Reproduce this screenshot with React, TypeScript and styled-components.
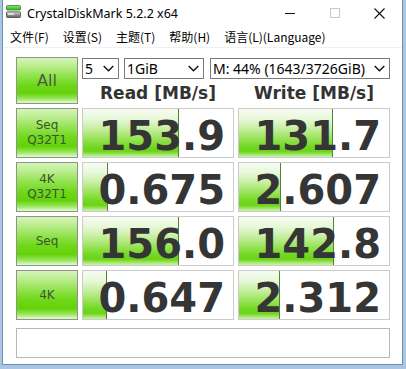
import React from 'react';
import styled, { createGlobalStyle } from 'styled-components';

const Global = createGlobalStyle`
  html, body { margin: 0; padding: 0; }
  body {
    background: #a9c6e2;
    width: 406px;
    height: 369px;
    overflow: hidden;
  }
  #root { width: 406px; height: 369px; }
`;

const Window = styled.div`
  box-sizing: border-box;
  margin-left: 2px;
  width: 401px;
  height: 365px;
  border: 1px solid #6f90b3;
  border-top: none;
  background: #ffffff;
  display: flex;
  flex-direction: column;
`;

const TitleBar = styled.div`
  height: 26px;
  display: flex;
  align-items: center;
  flex-shrink: 0;
`;

const AppIcon = styled.svg`
  margin-left: 3px;
  margin-bottom: 4px;
  flex-shrink: 0;
`;

const Title = styled.div`
  margin-left: 6px;
  font-family: "Noto Sans", "Noto Sans CJK SC", sans-serif;
  font-size: 12.5px;
  color: #000;
  white-space: nowrap;
`;

const Caption = styled.div`
  margin-left: auto;
  display: flex;
  height: 100%;
`;

const CaptionButton = styled.div`
  width: 45px;
  height: 100%;
  display: flex;
  align-items: center;
  justify-content: center;
`;

const MenuBar = styled.div`
  height: 21px;
  display: flex;
  align-items: center;
  flex-shrink: 0;
  border-bottom: 1px solid #f0f0f0;
`;

const MenuItem = styled.div`
  padding: 0 7px;
  font-family: "Noto Sans CJK SC", "Noto Sans", sans-serif;
  font-size: 12px;
  color: #000;
  white-space: nowrap;
`;

const Client = styled.div`
  flex: 1;
  padding: 9px 0 0 13px;
`;

const Board = styled.div`
  display: grid;
  grid-template-columns: 62px 152px 152px;
  grid-auto-rows: 50px;
  grid-template-rows: 47px;
  column-gap: 4px;
  row-gap: 4px;
`;

const greenFace = `
  linear-gradient(to bottom,
    #d6f4bc 0%,
    #bdee92 16%,
    #94e352 38%,
    #6fd81a 60%,
    #64d20a 78%,
    #98e65a 90%,
    #e6fad6 100%)
`;

const LabelButton = styled.div<{ $big?: boolean }>`
  box-sizing: border-box;
  border: 1px solid #8d958a;
  background: ${greenFace};
  display: flex;
  flex-direction: column;
  align-items: center;
  justify-content: center;
  font-family: "DejaVu Sans", "Liberation Sans", sans-serif;
  font-size: ${(p) => (p.$big ? '16px' : '12px')};
  line-height: 15px;
  color: ${(p) => (p.$big ? '#4b5a47' : '#3a5530')};
`;

const TopRight = styled.div`
  grid-column: 2 / 4;
  display: flex;
  flex-direction: column;
`;

const SelectRow = styled.div`
  margin-top: 1px;
  display: flex;
  height: 21px;
`;

const Select = styled.div<{ $w: number; $gap?: number }>`
  box-sizing: border-box;
  width: ${(p) => p.$w}px;
  margin-left: ${(p) => p.$gap ?? 0}px;
  height: 21px;
  border: 1px solid #7a7a7a;
  background: #fff;
  display: flex;
  align-items: center;
  padding: 0 4px 0 2px;
  font-family: "Noto Sans", sans-serif;
  font-size: 14px;
  color: #000;
  white-space: nowrap;
`;

const SelectText = styled.span`
  flex: 1;
  overflow: hidden;
`;

const HeaderRow = styled.div`
  margin-top: 4px;
  display: grid;
  grid-template-columns: 152px 152px;
  column-gap: 4px;
`;

const Header = styled.div`
  text-align: center;
  font-family: "DejaVu Sans", "Liberation Sans", sans-serif;
  font-weight: bold;
  font-size: 17px;
  line-height: 20px;
  color: #333333;
  white-space: nowrap;
`;

const ValueBox = styled.div`
  box-sizing: border-box;
  position: relative;
  border: 1px solid #cbcbcb;
  background: #fff;
  overflow: hidden;
`;

const Meter = styled.div`
  position: absolute;
  left: 0;
  top: 0;
  bottom: 0;
  box-sizing: border-box;
  border-right: 1px solid #55803a;
  background: linear-gradient(to bottom,
    #f7fcf2 0%,
    #e8f8da 20%,
    #c8efa4 40%,
    #9ce45e 60%,
    #74d824 78%,
    #6ad416 88%,
    #cdf3ac 100%);
`;

const Value = styled.div`
  position: relative;
  height: 48px;
  text-align: right;
  padding-right: 8px;
  font-family: "DejaVu Sans", "Liberation Sans", sans-serif;
  font-weight: bold;
  font-size: 40px;
  line-height: 54px;
  color: #353535;
  white-space: nowrap;
`;

const Status = styled.div`
  grid-column: 1 / 4;
  margin-top: 4px;
  height: 30px;
  box-sizing: border-box;
  border: 1px solid #b7b7b7;
  background: #fff;
`;

const Chevron = () => (
  <svg width="11" height="7" viewBox="0 0 11 7">
    <polyline points="0.7,0.9 5.5,5.7 10.3,0.9" fill="none" stroke="#111" strokeWidth="1.4" />
  </svg>
);

const rows = [
  { label: ['Seq', 'Q32T1'], read: '153.9', write: '131.7' },
  { label: ['4K', 'Q32T1'], read: '0.675', write: '2.607' },
  { label: ['Seq'], read: '156.0', write: '142.8' },
  { label: ['4K'], read: '0.647', write: '2.312' },
];

const meterWidth = (v: string) => {
  const n = parseFloat(v);
  const inner = 150;
  const r = Math.max(0, Math.min(1, Math.log10(n * 10) / 5));
  return Math.round(inner * r);
};

const Cell = ({ v }: { v: string }) => (
  <ValueBox>
    <Meter style={{ width: meterWidth(v) }} />
    <Value>{v}</Value>
  </ValueBox>
);

export default function App() {
  return (
    <>
      <Global />
      <Window>
        <TitleBar>
          <AppIcon width="15" height="13" viewBox="0 0 15 13">
            <defs>
              <linearGradient id="gtop" x1="0" y1="0" x2="0" y2="1">
                <stop offset="0" stopColor="#8fe86f" />
                <stop offset="1" stopColor="#2fae2f" />
              </linearGradient>
              <linearGradient id="gbot" x1="0" y1="0" x2="0" y2="1">
                <stop offset="0" stopColor="#d8d8d8" />
                <stop offset="1" stopColor="#5a5a5a" />
              </linearGradient>
            </defs>
            <rect x="0.5" y="0.5" width="14" height="4.5" rx="0.8" fill="url(#gtop)" stroke="#2b8a2b" strokeWidth="0.8" />
            <rect x="0.5" y="6.8" width="14" height="5.7" rx="0.8" fill="url(#gbot)" stroke="#4a4a4a" strokeWidth="0.8" />
            <rect x="2" y="8.3" width="6" height="1.4" fill="#f2f2f2" />
          </AppIcon>
          <Title>CrystalDiskMark 5.2.2 x64</Title>
          <Caption>
            <CaptionButton>
              <svg width="10" height="10" viewBox="0 0 10 10">
                <line x1="0" y1="5.5" x2="10" y2="5.5" stroke="#111" strokeWidth="1" />
              </svg>
            </CaptionButton>
            <CaptionButton>
              <svg width="10" height="10" viewBox="0 0 10 10">
                <rect x="0.5" y="0.5" width="9" height="9" fill="none" stroke="#c8c8c8" strokeWidth="1" />
              </svg>
            </CaptionButton>
            <CaptionButton>
              <svg width="11" height="11" viewBox="0 0 11 11">
                <line x1="0.5" y1="0.5" x2="10.5" y2="10.5" stroke="#111" strokeWidth="1.1" />
                <line x1="10.5" y1="0.5" x2="0.5" y2="10.5" stroke="#111" strokeWidth="1.1" />
              </svg>
            </CaptionButton>
          </Caption>
        </TitleBar>
        <MenuBar>
          <MenuItem>文件(F)</MenuItem>
          <MenuItem>设置(S)</MenuItem>
          <MenuItem>主题(T)</MenuItem>
          <MenuItem>帮助(H)</MenuItem>
          <MenuItem>语言(L)(Language)</MenuItem>
        </MenuBar>
        <Client>
          <Board>
            <LabelButton $big>All</LabelButton>
            <TopRight>
              <SelectRow>
                <Select $w={37}>
                  <SelectText>5</SelectText>
                  <Chevron />
                </Select>
                <Select $w={80} $gap={5}>
                  <SelectText>1GiB</SelectText>
                  <Chevron />
                </Select>
                <Select $w={180} $gap={6}>
                  <SelectText>M: 44% (1643/3726GiB)</SelectText>
                  <Chevron />
                </Select>
              </SelectRow>
              <HeaderRow>
                <Header>Read [MB/s]</Header>
                <Header>Write [MB/s]</Header>
              </HeaderRow>
            </TopRight>
            {rows.map((r) => (
              <React.Fragment key={r.label.join('-')}>
                <LabelButton>
                  {r.label.map((l) => (
                    <span key={l}>{l}</span>
                  ))}
                </LabelButton>
                <Cell v={r.read} />
                <Cell v={r.write} />
              </React.Fragment>
            ))}
            <Status />
          </Board>
        </Client>
      </Window>
    </>
  );
}
